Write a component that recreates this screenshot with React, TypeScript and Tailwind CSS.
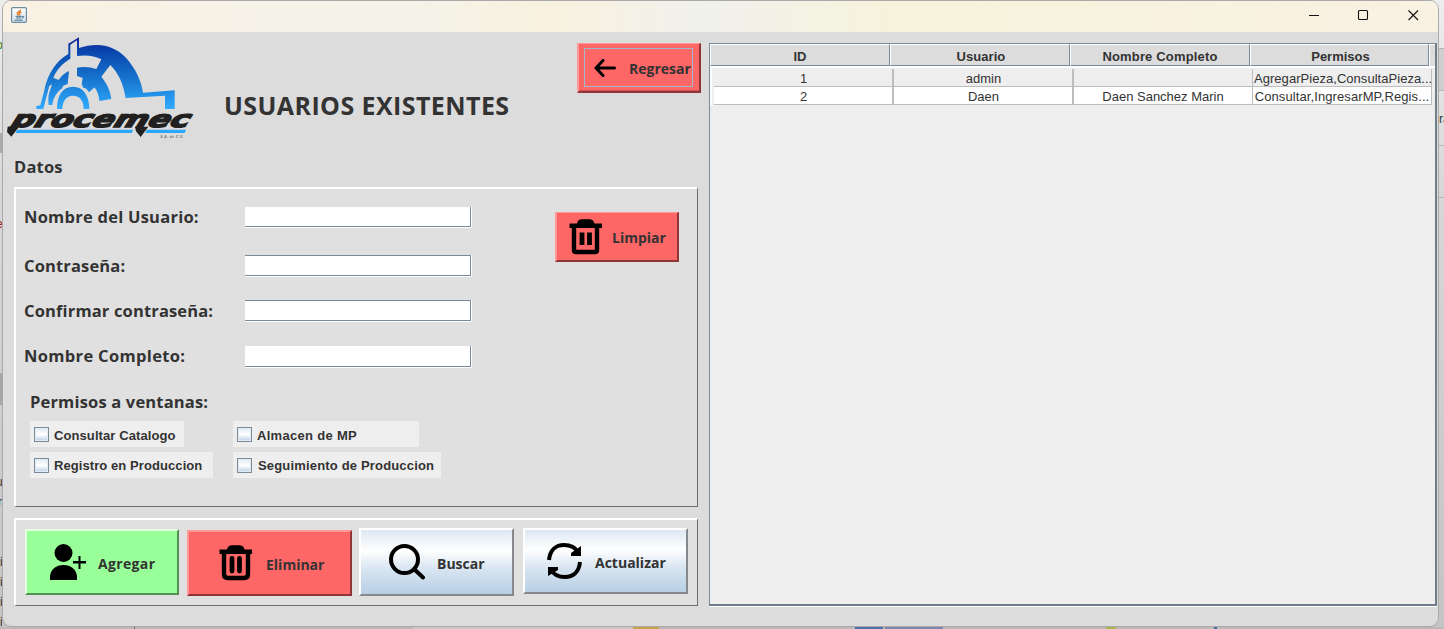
import React from "react";

const SEGOE = "font-['Open_Sans','Noto_Sans',sans-serif] font-bold text-[#333333] whitespace-nowrap";
const ARIAL = "font-['Liberation_Sans',Arial,sans-serif] text-[#333333] whitespace-nowrap";

function JavaIcon() {
  return (
    <svg className="mt-[7px] ml-2 h-4 w-4 shrink-0" viewBox="0 0 16 16" fill="none">
      <defs>
        <linearGradient id="cup" x1="0" y1="0" x2="0" y2="1">
          <stop offset="0" stopColor="#ffffff" />
          <stop offset="1" stopColor="#d3dfe8" />
        </linearGradient>
      </defs>
      <rect x=".6" y=".6" width="14.8" height="14.8" rx="1.2" fill="url(#cup)" stroke="#6f8ba0" strokeWidth="1.2" />
      <path d="M9.6 2.6C9.8 4.4 6 5 6.3 6.6c.1.7 1 1.200 1 1.800M10.300 4.800c-1.600.6-2.300 1.200-1.800 2 .4.500.4 1-.2 1.500" stroke="#e8791c" strokeWidth="1.400" />
      <path d="M4.500 9.300h6.300M5.200 11h5M3.500 13.200h8.200M11 9.500c1.800-.8 2.500 1 .1 1.800" stroke="#44708f" strokeWidth="1" />
    </svg>
  );
}

function Logo() {
  return (
    <svg className="mt-[3px] ml-[2px] h-[105px] w-[195px] shrink-0" viewBox="15 105 585 315">
      <defs>
        <linearGradient id="sky" gradientUnits="userSpaceOnUse" x1="0" y1="112" x2="0" y2="326">
          <stop offset="0" stopColor="#17209a" />
          <stop offset=".2" stopColor="#0846ae" />
          <stop offset=".6" stopColor="#1877d0" />
          <stop offset="1" stopColor="#30abff" />
        </linearGradient>
      </defs>
      {/* outer half wheel with the tower and the roof on the right */}
      <path
        fill="url(#sky)"
        d="M132 275C142 220 170 182 205 162V131L237 112V144C300 122 355 140 388 185C412 217 424 245 429 278L524 271V327H495V287L377 294C370 250 354 218 331 195L304 230C320 250 330 268 334 297L298 303C297 288 292 272 283 262L267 276L252 265H190L150 300Z"
      />
      <g fill="#dcdcdc">
        <path d="M211 134L231 121V168C257 164 285 167 304 178L289 207C270 200 250 199 231 203V228L248 234L244 262H202L207 213C196 218 184 227 176 240L160 233C170 208 188 190 211 176Z" />
        <path d="M128 327L147 259L160 250L186 258L176 327ZM157 327C157 285 180 250 220 250C260 250 280 285 280 327Z" />
      </g>
      <path fill="url(#sky)" d="M109 327V318L121 316L132 275L148 256L130 327ZM146 315C143 296 146 276 154 260L158 235L174 246L185 248L188 264C171 275 160 292 157 315Z" />
      <path fill="url(#sky)" d="M247 240L262 236L246 229V208L276 212L304 230L283 262L267 276L260 266L247 262L250 254L256 250Z" />
      <path fill="url(#sky)" d="M171 327C171 286 188 260 219 260C250 260 268 287 268 327H251C251 303 240 287 219 287C199 287 187 304 187 327Z" />
      <text
        transform="matrix(1 0 -.36 1 137 0)"
        x="30"
        y="381"
        textLength="534"
        lengthAdjust="spacingAndGlyphs"
        fontFamily="DejaVu Sans, sans-serif"
        fontWeight="bold"
        fontStyle="italic"
        fontSize="69"
        fill="#211f20"
        stroke="#211f20"
        strokeWidth="4.5"
        strokeLinejoin="miter"
      >
        procemec
      </text>
      <path fill="#dcdcdc" d="M16 384H600V411H16Z" />
      <path fill="#211f20" d="M23 380L62 374L34 410L21 396ZM405 380H445L422 411L408 394Z" />
      <path fill="#2aa6fb" d="M51 389H399L396 399H47ZM440 389H558L554 399H436Z" />
      <text x="481" y="413" textLength="69" fontFamily="Liberation Sans, sans-serif" fontStyle="italic" fontWeight="bold" fontSize="10" fill="#666666">
        S.A. de C.V.
      </text>
    </svg>
  );
}

function TrashIcon({ rounded }: { rounded?: boolean }) {
  return (
    <svg className="h-9 w-[34px] shrink-0" viewBox="0 0 34 36" fill="none">
      <path d="M.5 4.500H8C9 1 11 .3 13 .3H20C22.500.3 24.500 1 25.500 4.500H33V9H.5Z" fill="#000" />
      <path d={rounded ? "M5 8V29C5 31.500 6.500 33 9 33H25C27.500 33 29 31.500 29 29V8" : "M5 8V31.500C5 32.500 6 33 7 33H26C27 33 28 32.500 28 31.500V8"} stroke="#000" strokeWidth="4.400" />
      <path d="M13 13.500V26M20.500 13.500V26" stroke="#000" strokeWidth="4.800" strokeLinecap={rounded ? "round" : "butt"} />
    </svg>
  );
}

function Field({ label, first, spacing, top, line }: { label: string; first?: boolean; spacing: string; top: string; line?: boolean }) {
  return (
    <div className={`flex h-[22px] ${top}`}>
      <span className={`${SEGOE} ${spacing} ${line ? "pt-px" : ""} w-[221px] text-[16.5px] leading-[20px]`}>{label}</span>
      <div className={`flex w-[227px] bg-white pb-px ${first ? "h-[21px]" : "h-[22px]"}`}>
        <div className={`w-[226px] border-r border-b border-[#7a8a99] ${line ? "border-t" : ""}`} />
      </div>
    </div>
  );
}

function Check({ label, className, text }: { label: string; className: string; text: string }) {
  return (
    <label className={`flex h-[26px] items-center bg-[#eeeeee] pl-1 ${className}`}>
      <span className="mt-px h-[15px] w-[15px] shrink-0 border border-[#7a8a99] bg-linear-to-b from-[#dfe9f3] via-white to-[#b8cfe5] shadow-[inset_0_0_0_1px_#e3ebf3]" />
      <span className={`${ARIAL} ${text} text-[13px] leading-[18px] font-bold`}>{label}</span>
    </label>
  );
}

const RED = "bg-[#ff6666] border-t-[#ff9999] border-l-[#ff9999] border-r-[#8f3535] border-b-[#8f3535]";
const METAL = "bg-[linear-gradient(#dde8f3,#ffffff_32%,#dbe7f2_58%,#b8cfe5)] border-t-white border-l-white border-r-[#85898e] border-b-[#85898e]";

const columns = [
  { name: "ID", head: "w-[180px]", body: "w-[180px] border-r-2 pl-px", spacing: "" },
  { name: "Usuario", head: "w-[180px]", body: "w-[180px] border-r-2 pl-px", spacing: "tracking-[0.05px] pl-[2px]" },
  { name: "Nombre Completo", head: "w-[180px]", body: "w-[179px] border-r", spacing: "tracking-[0.17px]" },
  { name: "Permisos", head: "w-[179px]", body: "w-[179px] border-r", spacing: "tracking-[0px] pl-[2px]" },
];

const rows = [
  ["1", "admin", "", "AgregarPieza,ConsultaPieza..."],
  ["2", "Daen", "Daen Sanchez Marin", "Consultar,IngresarMP,Regis..."],
];

function UsersTable() {
  return (
    <div className="mt-[11px] h-[563px] w-[728px] border border-[#7a8a99] border-r-2 border-r-[#6f7d8a] border-b-2 border-b-[#6f7d8a] bg-[#eeeeee] shadow-[0_1px_0_white]">
      <div className="flex h-6 border-b-2 border-white bg-[#dcdcdc]">
        {columns.map((c) => (
          <div key={c.name} className={`${ARIAL} ${c.head} ${c.spacing} h-[22px] border-t border-l border-t-white border-l-white border-r border-r-[#7a8a99] border-b border-b-[#7a8a99] text-center text-[13px] leading-[24px] font-bold`}>
            {c.name}
          </div>
        ))}
        <div className="h-[22px] flex-1 border-t border-l border-white" />
      </div>
      <div className="border-l-2 border-white pl-[2px]">
        {rows.map((r, i) => (
          <div key={r[0]} className={`flex ${i ? "h-[18px] [&>div]:bg-white" : "h-[19px] pt-px"}`}>
            {r.map((cell, j) => (
              <div key={j} className={`${ARIAL} ${columns[j].body} border-b border-[#bdbdbd] pt-px text-center text-[13px] leading-[18px] ${j === 3 ? (i ? "tracking-[0.1px]" : "tracking-[0.04px] pl-px") : ""}`}>
                {cell}
              </div>
            ))}
          </div>
        ))}
      </div>
    </div>
  );
}

export default function App() {
  return (
    <div className="relative flex h-[629px] w-[1444px] overflow-hidden bg-[linear-gradient(#eeeeee,#d8d8d8_30%,#c4c4c4)]">
      <div className="relative ml-[2px] h-[627px] w-[1437px] shrink-0 overflow-hidden rounded-[9px] border border-[#aaaaaa] bg-[#dcdcdc]">
        <div className="-mt-px flex h-8 bg-[linear-gradient(90deg,#f9f1e3,#f4f3ea_28%,#f8f1df_38%,#f1f1ec_49%,#f6f3dc_62%,#f9f1e2)]">
          <JavaIcon />
          <svg className="mt-[9px] mr-[19px] ml-auto h-3 w-[110px]" viewBox="0 0 110 12" fill="none" stroke="#111" strokeWidth="1.100">
            <path d="M0 6.500H10M99.500 1.500L109 11M109 1.500L99.500 11" />
            <rect x="49.500" y="1.500" width="9" height="9" rx="1" />
          </svg>
        </div>
        <div className="flex">
          <div className="w-[706px]">
            <div className="flex h-[120px]">
              <Logo />
              <h1 className={`${SEGOE} mt-[56px] ml-[24px] text-[25px] leading-[34px] tracking-[0.42px]`}>USUARIOS EXISTENTES</h1>
              <div className={`mt-[11px] mr-[8px] ml-auto h-[50px] w-[124px] border-2 border-t ${RED} shadow-[inset_0_-1px_0_#cc5252]`}>
                <button className={`${SEGOE} mt-[4px] ml-[5px] flex h-[39px] w-[109px] items-center border border-[#a3b8cc] text-[14px]`}>
                  <svg className="ml-[9px] h-[18px] w-[22px] shrink-0" viewBox="0 0 22 18" fill="none" stroke="#000" strokeWidth="3">
                    <path d="M20.500 9H2M9 1.500L2 9L9 16.500" strokeLinecap="round" strokeLinejoin="round" />
                  </svg>
                  <span className="mt-[2px] ml-[13px]">Regresar</span>
                </button>
              </div>
            </div>
            <h2 className={`${SEGOE} h-[35px] pt-[3px] pl-[11px] text-[16.5px] leading-[24px] tracking-[0.2px]`}>Datos</h2>
            <section className="ml-[11px] flex h-[320px] w-[684px] border-t-2 border-r border-b border-l-2 border-t-white border-r-[#6e6e6e] border-b-[#6e6e6e] border-l-white bg-[#e0e0e0] pl-[8px]">
              <div className="w-[450px]">
                <Field first label="Nombre del Usuario:" spacing="tracking-[0.24px]" top="mt-[18px]" />
                <Field line label="Contraseña:" spacing="tracking-[0.15px]" top="mt-[26px]" />
                <Field line label="Confirmar contraseña:" spacing="tracking-[0.15px]" top="mt-[23px]" />
                <Field label="Nombre Completo:" spacing="tracking-[0.33px]" top="mt-[24px]" />
                <h3 className={`${SEGOE} mt-[22px] ml-[6px] h-[31px] text-[16.5px] leading-[24px] tracking-[0.17px]`}>Permisos a ventanas:</h3>
                <div className="ml-[6px] grid grid-cols-[203px_auto] gap-y-[5px]">
                  <Check label="Consultar Catalogo" className="w-[154px]" text="mt-[3px] ml-[5px] tracking-[0.09px]" />
                  <Check label="Almacen de MP" className="w-[186px]" text="mt-[3px] ml-[5px] tracking-[0.3px]" />
                  <Check label="Registro en Produccion" className="w-[183px]" text="mt-px ml-[5px] tracking-[0.08px]" />
                  <Check label="Seguimiento de Produccion" className="w-[208px]" text="mt-px ml-[6px] tracking-[0.17px]" />
                </div>
              </div>
              <button className={`${SEGOE} mt-[23px] ml-[81px] flex h-[50px] w-[124px] items-center border-2 border-t ${RED} pl-[12px] text-[14px]`}>
                <TrashIcon />
                <span className="mt-[2px] ml-[9px]">Limpiar</span>
              </button>
            </section>
            <section className="mt-[11px] ml-[11px] flex h-[88px] w-[684px] border-t-2 border-r border-b border-l-2 border-t-white border-r-[#6e6e6e] border-b-[#6e6e6e] border-l-white bg-[#e0e0e0] pl-[9px]">
              <button className={`${SEGOE} mt-[9px] flex h-[66px] w-[154px] items-center border-2 border-t-[#e2ffe2] border-r-[#568f56] border-b-[#568f56] border-l-[#e2ffe2] bg-[#99ff99] text-[14px]`}>
                <svg className="ml-[22px] h-[36px] w-[37px] shrink-0" viewBox="0 0 37 36">
                  <circle cx="14.500" cy="9" r="9" />
                  <path d="M1 36V32C2 25 7 21 14.500 21S27 25 28 32V36ZM29.500 12H31.500V17H37V19.500H31.500V25H29.500V19.500H24V17H29.500Z" />
                </svg>
                <span className="mt-[3px] ml-[12px] tracking-[0.35px]">Agregar</span>
              </button>
              <button className={`${SEGOE} mt-[10px] ml-[8px] flex h-[66px] w-[165px] items-center border-2 ${RED} pl-[30px] text-[14px]`}>
                <TrashIcon rounded />
                <span className="mt-[3px] ml-[13px]">Eliminar</span>
              </button>
              <button className={`${SEGOE} mt-[8px] ml-[7px] flex h-[68px] w-[155px] items-center border-2 ${METAL} text-[14px]`}>
                <svg className="ml-[28px] h-[36px] w-[36px] shrink-0" viewBox="0 0 36 36" fill="none" stroke="#000">
                  <circle cx="15.500" cy="15.500" r="13.500" strokeWidth="4" />
                  <path d="M25 25L34 33.500" strokeWidth="4" strokeLinecap="round" />
                </svg>
                <span className="mt-[3px] ml-[12px]">Buscar</span>
              </button>
              <button className={`${SEGOE} mt-[8px] ml-[9px] flex h-[66px] w-[165px] items-center border-2 ${METAL} text-[14px]`}>
                <svg className="ml-[22px] h-[36px] w-[35px] shrink-0" viewBox="0 0 35 36">
                  <path d="M2 17C3 7 9 2 17 2C23 2 28 4 31 9M33 19C32 29 26 34 18 34C12 34 7 32 4 27" fill="none" stroke="#000" strokeWidth="4" />
                  <path d="M34 3V13H24V10ZM1 33V24H11V27Z" />
                </svg>
                <span className="mt-[2px] ml-[13px]">Actualizar</span>
              </button>
            </section>
          </div>
          <UsersTable />
        </div>
      </div>
      <div aria-hidden="true" className={`${ARIAL} absolute top-0 left-0 h-[629px] w-[2px] overflow-hidden text-[12px] leading-[20px]`}>
        <div className="mt-[35px] text-[#238023] [text-indent:-4px]">o</div>
        <div className="mt-[78px] h-5 bg-[#aaaaaa]" />
        <div className="mt-[61px] text-[#a02020] [text-indent:-4px]">e</div>
        <div className="mt-[139px] h-8 bg-[#a6a6a6]" />
        <div className="mt-[67px] [text-indent:-4px]">u</div>
        <div className="[text-indent:-2px]">r</div>
        <div className="mt-[40px]">i<br />i<br />i<br />i</div>
      </div>
      <div className={`${ARIAL} flex-1 overflow-hidden pt-[48px] text-[12px]`}>
        <div className="h-[43px] border-y border-[#b5b5b5] bg-[#cfcfcf]" />
        <div className="h-[55px] border-b border-[#b5b5b5] pt-[19px]">ra</div>
        <div className="h-[52px] border-b border-[#b5b5b5]" />
      </div>
      <div aria-hidden="true" className="absolute bottom-0 left-0 flex h-[2px] w-[1444px] bg-[#b9b9b9]">
        <div className="ml-[134px] w-px bg-[#666]" />
        <div className="ml-[278px] w-[220px] bg-[#c8c8c8]" />
        <div className="w-[26px] bg-[#c4a64c]" />
        <div className="ml-[196px] w-[28px] bg-[#4b70a6]" />
        <div className="ml-[2px] w-[58px] bg-[#7c88b0]" />
        <div className="ml-[163px] w-[10px] bg-[#a3b94d]" />
        <div className="ml-[98px] w-[3px] bg-[#4b70a6]" />
      </div>
    </div>
  );
}
